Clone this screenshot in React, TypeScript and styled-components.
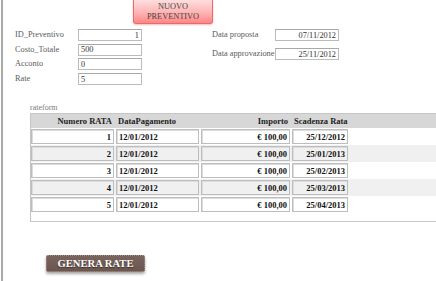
import React from 'react';
import styled, { createGlobalStyle } from 'styled-components';

const GlobalStyle = createGlobalStyle`
  html, body {
    margin: 0;
    padding: 0;
    background: #ffffff;
    overflow: hidden;
  }
  body {
    font-family: 'Liberation Serif', 'Times New Roman', serif;
  }
`;

const Page = styled.div`
  margin-left: 1px;
  border-left: 2px solid #a9a9a9;
  height: 100vh;
  box-sizing: border-box;
`;

const TopBar = styled.div`
  display: flex;
  padding-left: 130px;
`;

const NewButton = styled.button`
  width: 80px;
  height: 24px;
  padding: 1px 0 0;
  margin: 0;
  border: 1px solid #e86a6a;
  border-top: none;
  border-radius: 0 0 3px 3px;
  background: linear-gradient(to bottom, #ffdede 0%, #ffb4b4 55%, #ff8686 100%);
  box-shadow: 0 1px 2px rgba(200, 60, 60, 0.35);
  color: #444;
  font-family: 'Liberation Serif', 'Times New Roman', serif;
  font-size: 8.3px;
  line-height: 10px;
  text-align: center;
  display: flex;
  flex-direction: column;
  align-items: center;
  justify-content: flex-start;
  padding-top: 2px;
  box-sizing: border-box;
`;

const FormArea = styled.div`
  display: flex;
  margin-top: 5px;
`;

const FieldGrid = styled.div<{ $left: number; $gap: number }>`
  display: grid;
  grid-template-columns: 63px 64px;
  row-gap: ${p => p.$gap}px;
  margin-left: ${p => p.$left}px;
  align-items: center;
  align-content: start;
`;

const Label = styled.label`
  color: #5a5a5a;
  font-size: 8.3px;
  line-height: 12px;
  white-space: nowrap;
`;

const Field = styled.input<{ $right?: boolean }>`
  width: 64px;
  height: 12px;
  box-sizing: border-box;
  margin: 0;
  padding: 0 2px;
  border: 1px solid #bcbcbc;
  border-top-color: #a8a8a8;
  background: #fff;
  color: #333;
  font-family: 'Liberation Serif', 'Times New Roman', serif;
  font-size: 8.3px;
  line-height: 10px;
  text-align: ${p => (p.$right ? 'right' : 'left')};
  outline: none;
`;

const Caption = styled.div`
  margin: 18px 0 0 27px;
  color: #7a7a7a;
  font-size: 8px;
  line-height: 10px;
`;

const RateBox = styled.div`
  margin-left: 27px;
  border: 1px solid #c6c6c6;
  border-right: none;
`;

const HeaderRow = styled.div`
  display: flex;
  gap: 2px;
  height: 14px;
  align-items: center;
  background: #d7d7d7;
`;

const HeadCell = styled.div<{ $w: number; $align: string }>`
  width: ${p => p.$w}px;
  box-sizing: border-box;
  padding: 0 2px;
  text-align: ${p => p.$align};
  font-weight: bold;
  font-size: 8.5px;
  color: #222;
  white-space: nowrap;
`;

const Row = styled.div<{ $alt: boolean }>`
  display: flex;
  gap: 2px;
  padding: 1px 0;
  background: ${p => (p.$alt ? '#f0f0f0' : '#ffffff')};
`;

const Cell = styled.div<{ $w: number; $align: string }>`
  width: ${p => p.$w}px;
  height: 15px;
  box-sizing: border-box;
  border: 1px solid #bdbdbd;
  box-shadow: inset 1px 1px 0 #dcdcdc;
  padding: 0 2px;
  display: flex;
  align-items: center;
  justify-content: ${p => (p.$align === 'right' ? 'flex-end' : 'flex-start')};
  font-weight: bold;
  font-size: 8.5px;
  color: #111;
  white-space: nowrap;
`;

const FooterSpace = styled.div`
  height: 8px;
`;

const GenerateButton = styled.button`
  margin: 33px 0 0 43px;
  width: 99px;
  height: 17px;
  padding: 0;
  border: 1px dotted #a8968e;
  border-radius: 2px;
  background: linear-gradient(to bottom, #7a655d 0%, #6a564f 100%);
  box-shadow: 0 2px 3px rgba(0, 0, 0, 0.35);
  color: #ffffff;
  font-family: 'Liberation Serif', 'Times New Roman', serif;
  font-weight: bold;
  font-size: 10.6px;
  line-height: 15px;
  text-shadow: 0 1px 1px rgba(0, 0, 0, 0.5);
  display: block;
`;

const columns = [
  { w: 83, align: 'right', title: 'Numero RATA' },
  { w: 83, align: 'left', title: 'DataPagamento' },
  { w: 89, align: 'right', title: 'Importo' },
  { w: 56, align: 'right', title: 'Scadenza Rata' },
];

const rate = [
  ['1', '12/01/2012', '€ 100,00', '25/12/2012'],
  ['2', '12/01/2012', '€ 100,00', '25/01/2013'],
  ['3', '12/01/2012', '€ 100,00', '25/02/2013'],
  ['4', '12/01/2012', '€ 100,00', '25/03/2013'],
  ['5', '12/01/2012', '€ 100,00', '25/04/2013'],
];

const App = () => {
  return (
    <>
      <GlobalStyle />
      <Page>
        <TopBar>
          <NewButton>
            <span>NUOVO</span>
            <span>PREVENTIVO</span>
          </NewButton>
        </TopBar>

        <FormArea>
          <FieldGrid $left={12} $gap={2.7}>
            <Label>ID_Preventivo</Label>
            <Field readOnly value="1" $right />
            <Label>Costo_Totale</Label>
            <Field readOnly value="500" />
            <Label>Acconto</Label>
            <Field readOnly value="0" />
            <Label>Rate</Label>
            <Field readOnly value="5" />
          </FieldGrid>
          <FieldGrid $left={70} $gap={7}>
            <Label>Data proposta</Label>
            <Field readOnly value="07/11/2012" $right />
            <Label>Data approvazione</Label>
            <Field readOnly value="25/11/2012" $right />
          </FieldGrid>
        </FormArea>

        <Caption>rateform</Caption>
        <RateBox>
          <HeaderRow>
            {columns.map(c => (
              <HeadCell key={c.title} $w={c.w} $align={c.align}>
                {c.title}
              </HeadCell>
            ))}
          </HeaderRow>
          {rate.map((r, i) => (
            <Row key={i} $alt={i % 2 === 1}>
              {r.map((v, j) => (
                <Cell key={j} $w={columns[j].w} $align={columns[j].align}>
                  {v}
                </Cell>
              ))}
            </Row>
          ))}
          <FooterSpace />
        </RateBox>

        <GenerateButton>GENERA RATE</GenerateButton>
      </Page>
    </>
  );
};

export default App;
